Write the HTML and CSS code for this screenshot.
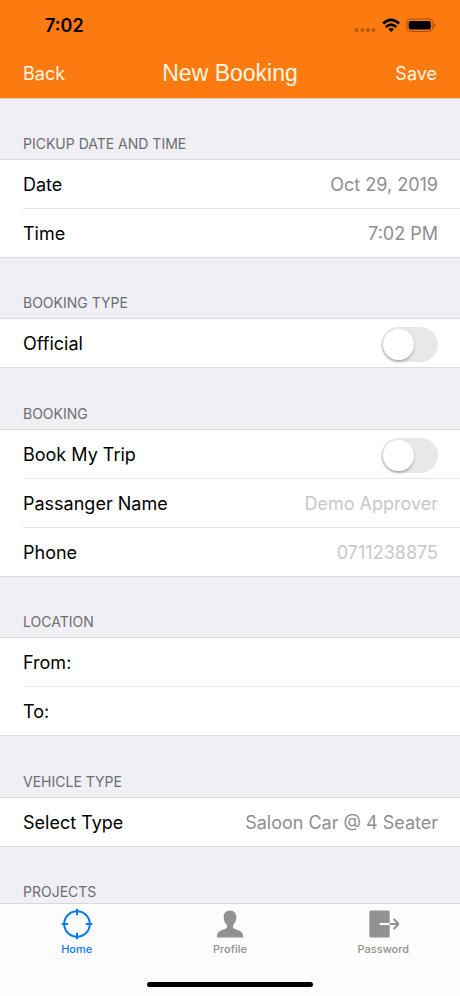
FILE: index.html
```html
<!DOCTYPE html>
<html lang="en">
<head>
<meta charset="utf-8">
<meta name="viewport" content="width=device-width, initial-scale=1">
<title>New Booking</title>
<link rel="stylesheet" href="styles.css">
</head>
<body>
<header class="top">
  <div class="status">
    <span class="clock">7:02</span>
    <svg class="status-icons" width="84" height="18" viewBox="0 0 84 18" aria-hidden="true">
      <g fill="#b95a0c"><circle cx="4.500" cy="13" r="2"/><circle cx="10.300" cy="13" r="2"/><circle cx="16" cy="13" r="2"/><circle cx="21.500" cy="13" r="2"/></g>
      <g fill="none" stroke="#000" stroke-width="2.700"><path d="M31.100 6.500q8-7.200 16 0"/><path d="M33.900 9.900q5.200-4.700 10.400 0"/></g>
      <path d="M36.300 12.200q2.800-2.200 5.600 0l-2.800 2.800z"/>
      <rect x="54.800" y="2" width="26" height="12.500" rx="4" fill="none" stroke="#a4500c"/>
      <rect x="56.700" y="3.900" width="22.200" height="8.700" rx="2.200"/>
      <path d="M82.200 6.200q1.600.6 1.600 2.100t-1.600 2.100z" fill="#a4500c"/>
    </svg>
  </div>
  <nav class="bar">
    <button class="bar-button" type="button">Back</button>
    <h1 class="title">New Booking</h1>
    <button class="bar-button end" type="submit" form="booking">Save</button>
  </nav>
</header>
<main class="content">
  <form id="booking">
    <section class="section">
      <h2 class="heading">PICKUP DATE AND TIME</h2>
      <div class="group">
        <div class="row"><label for="date">Date</label><button class="value" id="date" type="button">Oct 29, 2019</button></div>
        <div class="row"><label for="time">Time</label><button class="value" id="time" type="button">7:02 PM</button></div>
      </div>
    </section>
    <section class="section">
      <h2 class="heading">BOOKING TYPE</h2>
      <div class="group">
        <div class="row"><label for="official">Official</label><input class="switch" id="official" type="checkbox"></div>
      </div>
    </section>
    <section class="section">
      <h2 class="heading">BOOKING</h2>
      <div class="group">
        <div class="row"><label for="mytrip">Book My Trip</label><input class="switch" id="mytrip" type="checkbox"></div>
        <div class="row"><label for="name">Passanger Name</label><input class="value" id="name" type="text" placeholder="Demo Approver"></div>
        <div class="row"><label for="phone">Phone</label><input class="value" id="phone" type="tel" placeholder="0711238875"></div>
      </div>
    </section>
    <section class="section">
      <h2 class="heading">LOCATION</h2>
      <div class="group">
        <div class="row"><label for="from">From:</label><input class="value" id="from" type="text"></div>
        <div class="row"><label for="to">To:</label><input class="value" id="to" type="text"></div>
      </div>
    </section>
    <section class="section">
      <h2 class="heading">VEHICLE TYPE</h2>
      <div class="group">
        <div class="row"><label for="type">Select Type</label><select class="value" id="type"><option>Saloon Car @ 4 Seater</option></select></div>
      </div>
    </section>
    <section class="section">
      <h2 class="heading">PROJECTS</h2>
    </section>
  </form>
</main>
<footer class="bottom">
  <nav class="tabs">
    <a class="tab active" href="#home">
      <svg width="32" height="32" viewBox="0 0 32 32" fill="none" stroke="currentColor" stroke-width="2" aria-hidden="true"><circle cx="16" cy="16" r="12.800"/><path d="M16 .8v6.400M16 24.800v6.400M.8 16h6.400M24.800 16h6.400"/></svg>
      Home
    </a>
    <a class="tab" href="#profile">
      <svg width="32" height="32" viewBox="0 0 32 32" fill="currentColor" aria-hidden="true"><path d="M16 2.500c-4.200 0-6.500 3-6.300 7 .1 3.200 1.300 5.600 3 7.200.7 1.700.3 3.200-.7 3.800-3 1.400-6.300 1.800-7.900 4.100-.8 1.200-1.200 3-1.300 4.900h26.400c-.1-1.900-.5-3.700-1.300-4.900-1.600-2.300-4.900-2.700-7.900-4.100-1-.6-1.400-2.100-.7-3.800 1.700-1.600 2.900-4 3-7.200.2-4-2.100-7-6.300-7z"/></svg>
      Profile
    </a>
    <a class="tab" href="#password">
      <svg width="32" height="32" viewBox="0 0 32 32" aria-hidden="true"><rect x="2.300" y="2.500" width="20.400" height="27" rx="1.500" fill="currentColor"/><path d="M12.700 16h10" stroke="#fcfcfc" stroke-width="2.200"/><path d="M22.700 16h9M26.700 10.900l5 5.100-5 5.100" fill="none" stroke="currentColor" stroke-width="2.100"/></svg>
      Password
    </a>
  </nav>
  <div class="home-bar"></div>
</footer>
</body>
</html>
```
FILE: styles.css
```css
* {
  box-sizing: border-box;
}

body {
  margin: 0;
  height: 100vh;
  display: flex;
  flex-direction: column;
  background: #efeff4;
  color: #000;
  font-family: Inter, "Liberation Sans", sans-serif;
  font-size: 18px;
  line-height: 24px;
}

button,
input,
select {
  margin: 0;
  padding: 0;
  border: 0;
  background: none;
  color: inherit;
  font: inherit;
}

.top {
  flex: none;
  background: #fb7b10;
  border-bottom: 1px solid #e8c6aa;
}

.status {
  height: 50px;
  padding: 2px 24px 0 45px;
  display: flex;
  align-items: center;
  justify-content: space-between;
}

.clock {
  font-weight: 600;
}

.bar {
  height: 48px;
  padding: 0 23px;
  display: grid;
  grid-template-columns: 1fr auto 1fr;
  align-items: center;
  color: #fff6e4;
}

.bar-button {
  justify-self: start;
}

.end {
  justify-self: end;
}

.title {
  margin: 0;
  padding-bottom: 2px;
  font-family: "Liberation Sans", sans-serif;
  font-size: 23px;
  font-weight: 400;
}

.content {
  flex: 1;
  min-height: 0;
  overflow: hidden;
}

.heading {
  height: 61px;
  margin: 0;
  padding: 0 23px 5px;
  display: flex;
  align-items: flex-end;
  color: #6d6d72;
  font-size: 14px;
  line-height: 20px;
  font-weight: 400;
}

.section:first-child .heading,
.section:nth-child(even) .heading {
  height: 60px;
}

.group {
  background: #fff;
  border-top: 1px solid #dcdce0;
  border-bottom: 1px solid #dcdce0;
}

.row {
  height: 49px;
  margin-left: 23px;
  padding: 2px 22px 0 0;
  display: flex;
  align-items: center;
  gap: 16px;
  border-bottom: 1px solid #e6e6e9;
}

.row:last-child {
  height: 48px;
  border-bottom: 0;
}

.row label {
  flex: none;
}

.value {
  flex: 1;
  min-width: 0;
  color: #8e8e93;
  text-align: right;
  text-align-last: right;
  appearance: none;
}

.value::placeholder {
  color: #c7c7cc;
  opacity: 1;
}

.switch {
  width: 57px;
  height: 35px;
  margin-left: auto;
  padding: 2px;
  border-radius: 18px;
  background: #e8e8e8;
  appearance: none;
}

.switch::before {
  content: "";
  display: block;
  width: 31px;
  height: 31px;
  border-radius: 50%;
  background: #fff;
  box-shadow: 0 2px 3px rgba(0, 0, 0, 0.25);
}

.switch:checked {
  background: #4cd964;
}

.switch:checked::before {
  margin-left: auto;
}

.bottom {
  flex: none;
  height: 93px;
  padding: 4px 0 9px;
  display: flex;
  flex-direction: column;
  justify-content: space-between;
  align-items: center;
  background: #fcfcfc;
  border-top: 1px solid #d9d9dd;
}

.tabs {
  width: 100%;
  display: grid;
  grid-template-columns: repeat(3, 1fr);
}

.tab {
  display: flex;
  flex-direction: column;
  align-items: center;
  gap: 1px;
  color: #929292;
  font-size: 11px;
  line-height: 16px;
  font-weight: 500;
  text-decoration: none;
}

.active {
  color: #087aee;
}

.home-bar {
  width: 36%;
  height: 5px;
  border-radius: 3px;
  background: #000;
}
```
